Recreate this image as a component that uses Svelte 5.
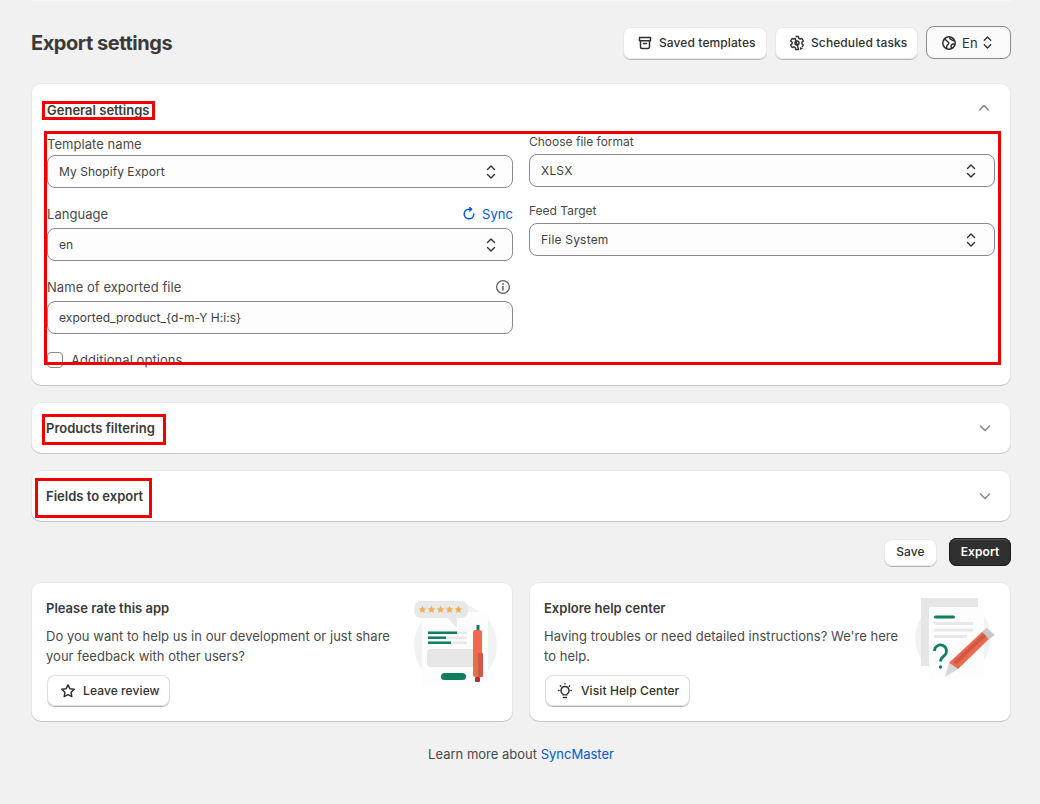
<script lang="ts">
  const tools = [
    { label: 'Saved templates', icon: 'archive' },
    { label: 'Scheduled tasks', icon: 'gear' },
  ];
  const collapsed = ['Products filtering', 'Fields to export'];
  const stars = [8.5, 17.5, 26.5, 35.5, 44.5];
  const bars = [
    { y: 30.5, w: 29 },
    { y: 35.5, w: 18 },
    { y: 40.5, w: 23 },
  ];
</script>

{#snippet updown()}
  <svg viewBox="0 0 12 18" width="12" height="18" fill="none" stroke="#303030" stroke-width="1.4" stroke-linecap="round" stroke-linejoin="round">
    <path d="M2.5 6.5 6 3l3.5 3.5M2.5 11.5 6 15l3.500-3.500" />
  </svg>
{/snippet}

{#snippet select(value: string)}
  <div class="field">
    <span>{value}</span>
    {@render updown()}
  </div>
{/snippet}

<main class="page">
  <header class="top">
    <h1>Export settings</h1>
    <div class="top-actions">
      {#each tools as tool}
        <button class="btn tool">
          {#if tool.icon === 'archive'}
            <svg viewBox="0 0 16 16" width="16" height="16" fill="none" stroke="#303030" stroke-width="1.5" stroke-linejoin="round" stroke-linecap="round">
              <path d="M2.5 2.5h11v3.2h-11zM3.500 5.700V12A1.500 1.500 0 0 0 5 13.500h6a1.500 1.500 0 0 0 1.500-1.500V5.700M6.500 8.500h3" />
            </svg>
          {:else}
            <svg viewBox="0 0 16 16" width="16" height="16" fill="none" stroke="#303030" stroke-width="1.4" stroke-linejoin="round">
              <path d="M6.600 1.500h2.800l.4 1.900 1.300.7 1.800-.6 1.400 2.400-1.400 1.300v1.600l1.400 1.300-1.200 2.100M9.600 14.500H6.600l-.4-1.900-1.300-.7-1.800.6-1.400-2.400 1.400-1.300V7.200L1.700 5.900l1.400-2.400 1.800.6 1.300-.7z" />
              <circle cx="8" cy="8" r="2" />
              <path d="M11 12l3 1.500-3 1.500z" fill="#303030" stroke="none" />
            </svg>
          {/if}
          {tool.label}
        </button>
      {/each}
      <button class="btn lang">
        <svg viewBox="0 0 16 16" width="16" height="16" fill="none" stroke="#303030" stroke-width="1.5" stroke-linejoin="round">
          <circle cx="8" cy="8" r="6.2" />
          <path d="M3 4.500c1.500 0 2.500.5 3 1.500s1.800 1 1.800 2.200-1.300 1.200-1.800 2.300l-.5 3M9 1.900c-.5 1.300 0 2.300 1.200 2.600s1.500 1.500 3.300 1.200M14 9.500c-1.500-.7-2.800-.5-3.500.5s-.5 2-.2 3.500" />
        </svg>
        En
        <svg viewBox="0 0 12 18" width="11" height="17" fill="none" stroke="#303030" stroke-width="1.5" stroke-linecap="round" stroke-linejoin="round">
          <path d="M2.500 6.500 6 3l3.500 3.500M2.500 11.500 6 15l3.500-3.500" />
        </svg>
      </button>
    </div>
  </header>

  <section class="card general">
    <div class="card-head">
      <h2>General settings</h2>
      <svg viewBox="0 0 14 14" width="14" height="14" fill="none" stroke="#8a8a8a" stroke-width="1.6" stroke-linecap="round" stroke-linejoin="round">
        <path d="M2.500 9 7 4.500 11.500 9" />
      </svg>
    </div>
    <div class="form">
      <div class="col left">
        <div class="group">
          <div class="label first">Template name</div>
          {@render select('My Shopify Export')}
        </div>
        <div class="group">
          <div class="label">
            Language
            <span class="sync">
              <svg viewBox="0 0 14 14" width="14" height="14" fill="none" stroke="#005bd3" stroke-width="1.5" stroke-linecap="round" stroke-linejoin="round">
                <path d="M11.800 7A4.800 4.800 0 1 1 7 2.200h2.500M7.800.6 9.700 2.200 7.800 4" />
              </svg>
              Sync
            </span>
          </div>
          {@render select('en')}
        </div>
        <div class="group">
          <div class="label">
            Name of exported file
            <svg class="info" viewBox="0 0 16 16" width="16" height="16" fill="none" stroke="#616161" stroke-width="1.3" stroke-linecap="round">
              <circle cx="8" cy="8" r="6.4" />
              <path d="M8 7.500V11" stroke-width="1.5" />
              <circle cx="8" cy="5" r=".9" fill="#616161" stroke="none" />
            </svg>
          </div>
          <div class="field">exported_product_&#123;d-m-Y H:i:s&#125;</div>
        </div>
        <label class="check">
          <span class="box"></span>
          Additional options
        </label>
      </div>
      <div class="col right">
        <div class="group">
          <div class="label">Choose file format</div>
          {@render select('XLSX')}
        </div>
        <div class="group">
          <div class="label">Feed Target</div>
          {@render select('File System')}
        </div>
      </div>
    </div>
    <div class="mark mark-title"></div>
    <div class="mark mark-form"></div>
  </section>

  {#each collapsed as title, i}
    <section class="card bar">
      <h2>{title}</h2>
      <svg viewBox="0 0 14 14" width="14" height="14" fill="none" stroke="#8a8a8a" stroke-width="1.6" stroke-linecap="round" stroke-linejoin="round">
        <path d="M2.500 5 7 9.500 11.500 5" />
      </svg>
      <div class="mark" class:mark-products={i === 0} class:mark-fields={i === 1}></div>
    </section>
  {/each}

  <div class="save-row">
    <button class="btn plain">Save</button>
    <button class="btn dark">Export</button>
  </div>

  <div class="promo-grid">
    <section class="card promo">
      <div class="promo-body">
        <h3>Please rate this app</h3>
        <p>Do you want to help us in our development or just share your feedback with other users?</p>
        <button class="btn outline">
          <svg viewBox="0 0 16 16" width="16" height="16" fill="none" stroke="#303030" stroke-width="1.5" stroke-linejoin="round">
            <path d="m8 1.800 1.900 3.900 4.300.6-3.100 3 .7 4.300L8 11.600l-3.800 2 .7-4.300-3.100-3 4.300-.6z" />
          </svg>
          Leave review
        </button>
      </div>
      <svg class="art rate" viewBox="0 0 84 86" width="84" height="86">
        <circle cx="41.5" cy="44" r="41.5" fill="#f1f2f3" />
        <rect x="8" y="11" width="66" height="75" fill="#fdfdfd" />
        <path d="M7 0h40a7 7 0 0 1 7 7v3a7 7 0 0 1-7 7h-4v10l-9-10H7a7 7 0 0 1-7-7V7a7 7 0 0 1 7-7z" fill="#e8e8e8" />
        {#each stars as cx}
          <path d="m0-3.800 1.100 2.500 2.700.3-2 1.800.6 2.700L0 2.100-2.400 3.500-1.800.8l-2-1.800 2.700-.3z" transform="translate({cx} 8.500)" fill="#eeae52" />
        {/each}
        {#each bars as bar}
          <rect x="14" y={bar.y} width="39" height="2.5" fill="#e8e8e8" />
          <rect x="14" y={bar.y} width={bar.w} height="2.5" fill="#0f7f5f" />
        {/each}
        <rect x="13" y="48" width="50" height="18" rx="4" fill="#e6e6e6" />
        <rect x="27" y="72" width="25" height="7" rx="3.5" fill="#0f7f5f" />
        <rect x="62.500" y="24" width="3" height="6" fill="#0f7f5f" />
        <rect x="59" y="29" width="9" height="47" rx="2.5" fill="#ee6a4f" />
        <rect x="64" y="52" width="5" height="24" rx="1" fill="#cd5a46" />
        <rect x="61" y="76" width="5" height="5" rx="1" fill="#b0322e" />
      </svg>
    </section>

    <section class="card promo">
      <div class="promo-body">
        <h3>Explore help center</h3>
        <p>Having troubles or need detailed instructions? We're here to help.</p>
        <button class="btn outline help-btn">
          <svg viewBox="0 0 18 18" width="18" height="18" fill="none" stroke="#303030" stroke-width="1.4" stroke-linecap="round" stroke-linejoin="round">
            <path d="M9 4.500a4 4 0 0 0-2.400 7.200c.4.300.6.700.6 1.200h3.600c0-.5.200-.9.600-1.200A4 4 0 0 0 9 4.500zM7.500 15.500h3M9 1.500v.6M2.500 8.500h.6M14.900 8.500h.6M4.300 3.800l.5.500M13.700 3.800l-.5.500" />
          </svg>
          Visit Help Center
        </button>
      </div>
      <svg class="art help" viewBox="0 0 82 88" width="82" height="88">
        <circle cx="39" cy="40" r="38" fill="#f1f2f3" />
        <rect x="7" y="0" width="57" height="68" fill="#e6e6e6" />
        <rect x="15" y="9" width="55" height="72" fill="#fdfdfd" />
        <rect x="20" y="17.500" width="21" height="3" rx="1.5" fill="#0f7f5f" />
        <rect x="20" y="24" width="39" height="3" fill="#e8e8e8" />
        <rect x="20" y="30.500" width="39" height="3" fill="#e8e8e8" />
        <rect x="20" y="37" width="33" height="3" fill="#e8e8e8" />
        <path d="M20.500 53a6 6 0 1 1 9.800 4.600c-2.200 1.700-3.800 2.900-3.800 5.900" fill="none" stroke="#0f7f5f" stroke-width="2.7" />
        <circle cx="26.500" cy="69" r="1.700" fill="#0f7f5f" />
        <path d="M35 64.700 44 71 31 79.300z" fill="#d5d8da" />
        <path d="M68.300 33.700 75 41 44 71 35 64.700z" fill="#ee6a4f" />
        <path d="M69.500 35.500 72.500 38 42.500 66.500 39.500 64z" fill="#cd5a46" />
        <path d="M68.300 33.700 72.700 29.700 81 37 75 41z" fill="#c4c9cc" />
      </svg>
    </section>
  </div>

  <p class="foot">Learn more about <a href="#syncmaster">SyncMaster</a></p>
</main>

<style>
  :global(body) {
    margin: 0;
    background: #f1f1f1;
    font-family: Inter, "Liberation Sans", sans-serif;
    color: #303030;
  }

  .page {
    width: 980px;
    height: 804px;
    box-sizing: border-box;
    margin-left: 31px;
    padding-top: 25px;
    border-top: 1px solid #f7f7f7;
    overflow: hidden;
    font-size: 13px;
    line-height: 20px;
  }

  .top {
    display: flex;
    align-items: center;
    justify-content: space-between;
    height: 33px;
  }

  h1 {
    margin: 0;
    font-size: 20px;
    line-height: 32px;
    font-weight: 650;
    letter-spacing: -0.45px;
    color: #3a3a3a;
  }

  h2, h3 {
    margin: 0;
    font-size: 13px;
    line-height: 20px;
    font-weight: 600;
    color: #3a3a3a;
  }

  .top-actions {
    display: flex;
    align-items: center;
    gap: 8px;
  }

  .btn {
    display: inline-flex;
    align-items: center;
    justify-content: center;
    gap: 6px;
    box-sizing: border-box;
    height: 32px;
    padding: 0 12px;
    border: 0;
    border-radius: 8px;
    background: #fff;
    color: #303030;
    font: 500 12px/16px Inter, "Liberation Sans", sans-serif;
    letter-spacing: 0.1px;
    white-space: nowrap;
    box-shadow: inset 0 0 0 1px #e8e8e8, 0 1px 0 #b5b5b5;
  }

  .tool {
    justify-content: flex-start;
    padding: 0 0 0 14px;
  }

  .top-actions .tool:nth-child(1) { width: 144px; }
  .top-actions .tool:nth-child(2) { width: 143px; }

  .btn.lang {
    justify-content: flex-start;
    width: 85px;
    height: 33px;
    padding-left: 14px;
    gap: 5px;
    font-weight: 400;
    font-size: 13px;
    background: #fafafa;
    border: 1px solid #8a8a8a;
    box-shadow: none;
  }

  .lang svg:last-child { margin-left: -1px; }

  .card {
    position: relative;
    background: #fff;
    border-radius: 10px;
    box-shadow: inset 0 -1px 0 #c9c9c9, inset 0 0 0 1px #e8e8e8;
  }

  .general {
    height: 303px;
    margin-top: 24px;
    padding: 0 16px;
    box-sizing: border-box;
  }

  .card-head {
    display: flex;
    align-items: center;
    justify-content: space-between;
    height: 48px;
    padding: 2px 4px 0 0;
    box-sizing: border-box;
  }

  .card-head h2 { margin-top: 4px; }

  .form {
    display: flex;
    gap: 16px;
  }

  .col {
    flex: 1;
    min-width: 0;
  }

  .left { padding-top: 3px; }
  .right { padding-top: 1px; }

  .group { margin-bottom: 16px; }
  .right .group { margin-bottom: 14px; }

  .label {
    display: flex;
    align-items: center;
    justify-content: space-between;
    height: 20px;
    color: #4a4a4a;
    letter-spacing: 0.05px;
  }

  .left .label { margin-bottom: 4px; }
  .left .label.first { margin-bottom: 1px; }
  .right .label { margin-bottom: 2px; font-size: 12px; letter-spacing: 0; }

  .info { margin-right: 2px; }

  .sync {
    display: inline-flex;
    align-items: center;
    gap: 6px;
    color: #005bd3;
  }

  .field {
    display: flex;
    align-items: center;
    justify-content: space-between;
    box-sizing: border-box;
    height: 33px;
    padding: 0 15px 0 11px;
    border: 1px solid #8a8a8a;
    border-radius: 8px;
    background: #fdfdfd;
    font-size: 12px;
    letter-spacing: 0.05px;
    color: #3f3f3f;
  }

  .right .field { padding-right: 17px; letter-spacing: 0.2px; }

  .check {
    display: flex;
    align-items: center;
    gap: 8px;
    height: 16px;
    margin-top: 18px;
    color: #4a4a4a;
    letter-spacing: 0.05px;
  }

  .box {
    width: 14px;
    height: 14px;
    border: 1px solid #8a8a8a;
    border-radius: 4px;
    background: #fdfdfd;
  }

  .bar {
    display: flex;
    align-items: center;
    justify-content: space-between;
    height: 52px;
    margin-top: 16px;
    padding: 0 19px 0 15px;
  }

  .mark {
    position: absolute;
    box-sizing: border-box;
    border: 3px solid #f10000;
    pointer-events: none;
  }

  .mark-title { left: 11px; top: 18px; width: 113px; height: 19px; }
  .mark-form { left: 13px; top: 48px; width: 957px; height: 234px; }
  .mark-products { left: 11px; top: 12px; width: 124px; height: 31px; }
  .mark-fields { left: 4px; top: 8px; width: 117px; height: 40px; }

  .save-row {
    display: flex;
    justify-content: flex-end;
    align-items: center;
    gap: 12px;
    height: 28px;
    margin-top: 16px;
  }

  .plain {
    width: 53px;
    height: 27px;
  }

  .btn.dark {
    width: 62px;
    height: 28px;
    font-weight: 600;
    color: #fff;
    background: #303030;
    box-shadow: inset 0 0 0 1px #1a1a1a, inset 0 2px 0 #555;
  }

  .promo-grid {
    display: grid;
    grid-template-columns: 1fr 1fr;
    gap: 16px;
    margin-top: 16px;
  }

  .promo {
    display: flex;
    justify-content: space-between;
    height: 140px;
    padding: 16px 15px;
    box-sizing: border-box;
  }

  .promo-body {
    width: 362px;
    flex: none;
  }

  .promo p {
    margin: 8px 0 0;
    line-height: 20px;
    color: #4a4a4a;
    letter-spacing: 0.03px;
  }

  .btn.outline {
    margin: 9px 0 0 1px;
    height: 31px;
    gap: 7px;
    padding: 0 10px 0 13px;
    box-shadow: inset 0 0 0 1px #dedede, 0 1px 0 #b5b5b5;
  }

  .btn.help-btn { padding: 0 11px; }

  .art {
    flex: none;
    overflow: hidden;
  }

  .art.rate { margin-top: 3px; }

  .foot {
    margin: 22px 0 0;
    text-align: center;
    color: #4a4a4a;
  }

  .foot a {
    color: #005bd3;
    text-decoration: none;
  }
</style>
